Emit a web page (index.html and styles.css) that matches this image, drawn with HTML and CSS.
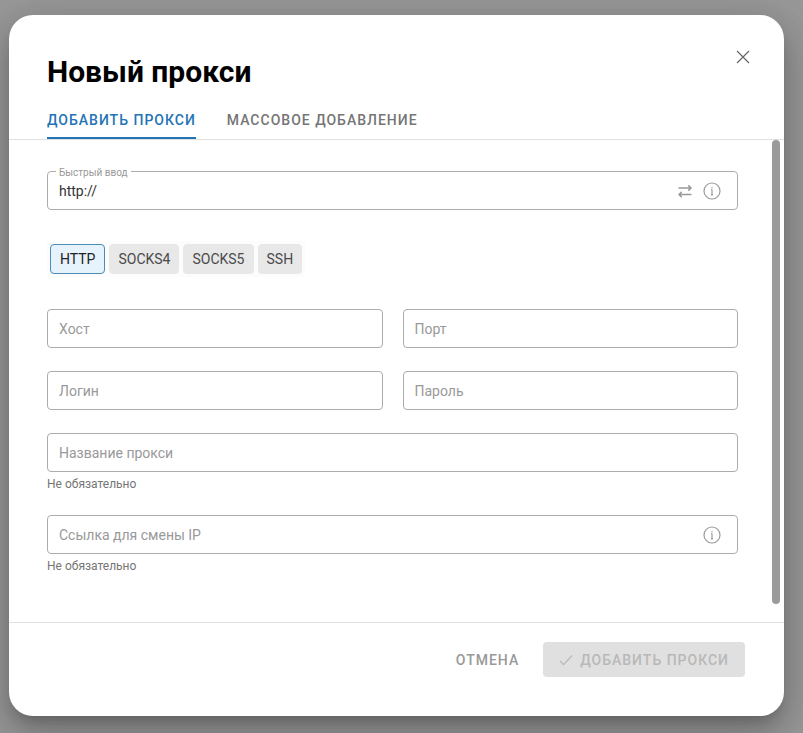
FILE: index.html
```
<!DOCTYPE html>
<html lang="ru">
<head>
  <meta charset="UTF-8">
  <meta name="viewport" content="width=device-width, initial-scale=1.0">
  <title>Новый прокси</title>
  <link rel="stylesheet" href="styles.css">
</head>
<body>

  <div class="modal" role="dialog" aria-labelledby="modal-title">
    <header class="modal-header">
      <div class="title-row">
        <h1 id="modal-title">Новый прокси</h1>
        <button class="icon-btn close" type="button" aria-label="Закрыть">
          <svg width="14" height="14" viewBox="0 0 14 14"><path d="M1 1l12 12M13 1L1 13"/></svg>
        </button>
      </div>
      <div class="tabs" role="tablist">
        <button class="tab active" type="button" role="tab" aria-selected="true">Добавить прокси</button>
        <button class="tab" type="button" role="tab" aria-selected="false">Массовое добавление</button>
      </div>
    </header>

    <div class="modal-body">
      <form class="form" id="proxy-form">
        <div class="field">
          <label class="float-label" for="quick">Быстрый ввод</label>
          <input id="quick" type="text" value="http://">
          <button class="icon-btn" type="button" aria-label="Поменять формат">
            <svg class="swap" width="14" height="14" viewBox="0 0 14 14"><path d="M.5 4H13M10.3 1.4L13 4l-2.7 2.6M13.5 10.5H1M3.7 7.9L1 10.5l2.7 2.6"/></svg>
          </button>
          <button class="icon-btn" type="button" aria-label="Подсказка">
            <svg class="info" width="18" height="18" viewBox="0 0 18 18"><circle cx="9" cy="9" r="8"/><path d="M9 7.6v5.2M9 5v1.3M8.2 7.6H9M8 12.8h2"/></svg>
          </button>
        </div>

        <div class="types">
          <label class="type"><input type="radio" name="type" checked><span>HTTP</span></label>
          <label class="type"><input type="radio" name="type"><span>SOCKS4</span></label>
          <label class="type"><input type="radio" name="type"><span>SOCKS5</span></label>
          <label class="type"><input type="radio" name="type"><span>SSH</span></label>
        </div>

        <div class="grid">
          <div class="field"><input type="text" placeholder="Хост" aria-label="Хост"></div>
          <div class="field"><input type="text" placeholder="Порт" aria-label="Порт"></div>
          <div class="field"><input type="text" placeholder="Логин" aria-label="Логин"></div>
          <div class="field"><input type="password" placeholder="Пароль" aria-label="Пароль"></div>
        </div>

        <div class="group">
          <div class="field"><input type="text" placeholder="Название прокси" aria-label="Название прокси" aria-describedby="name-hint"></div>
          <p class="hint" id="name-hint">Не обязательно</p>
        </div>

        <div class="group">
          <div class="field">
            <input type="text" placeholder="Ссылка для смены IP" aria-label="Ссылка для смены IP" aria-describedby="link-hint">
            <button class="icon-btn" type="button" aria-label="Подсказка">
              <svg class="info" width="18" height="18" viewBox="0 0 18 18"><circle cx="9" cy="9" r="8"/><path d="M9 7.6v5.2M9 5v1.3M8.2 7.6H9M8 12.8h2"/></svg>
            </button>
          </div>
          <p class="hint" id="link-hint">Не обязательно</p>
        </div>
      </form>
      <div class="scroll-thumb"></div>
    </div>

    <footer class="modal-footer">
      <button class="btn" type="button">Отмена</button>
      <button class="btn submit" type="submit" form="proxy-form" disabled>
        <svg width="14" height="12" viewBox="0 0 14 12"><path d="M1 7l3.6 3.6L13 1.5"/></svg>
        Добавить прокси
      </button>
    </footer>
  </div>

</body>
</html>
```

FILE: styles.css
```
:root {
  --blue: #2474b5;
  --border: #acacac;
  --line: #e0e0e0;
  --muted: #999;
}

* {
  box-sizing: border-box;
  margin: 0;
  padding: 0;
}

body {
  min-height: 100vh;
  display: flex;
  padding: 15px 19px 17px 9px;
  background: #989898;
  font-family: Roboto, sans-serif;
  font-size: 14px;
}

button,
input {
  font: inherit;
  color: inherit;
  border: 0;
  background: none;
}

button {
  cursor: pointer;
}

svg {
  display: block;
  fill: none;
  stroke: currentColor;
  stroke-width: 1.2;
}

.modal {
  flex: 1;
  display: flex;
  flex-direction: column;
  background: #fff;
  border-radius: 24px;
  overflow: hidden;
  box-shadow: 0 10px 14px -6px rgba(0, 0, 0, 0.2), 0 20px 36px 3px rgba(0, 0, 0, 0.14), 0 8px 42px 7px rgba(0, 0, 0, 0.12);
}

/* header */
.modal-header {
  padding: 32px 31px 0 38px;
  border-bottom: 1px solid var(--line);
}

.title-row {
  display: flex;
  justify-content: space-between;
  align-items: flex-start;
}

h1 {
  font-size: 30px;
  line-height: 50px;
  font-weight: 700;
  color: #000;
}

.icon-btn {
  flex: none;
  color: var(--muted);
}

.close {
  padding: 3px;
  color: #666;
}

.tabs {
  display: flex;
  gap: 31px;
}

.tab,
.btn {
  font-size: 14px;
  font-weight: 500;
  letter-spacing: 1px;
  text-transform: uppercase;
}

.tab {
  height: 42px;
  padding-top: 6px;
  color: #757575;
  border-bottom: 2px solid transparent;
}

.tab.active {
  color: var(--blue);
  border-color: var(--blue);
}

/* body */
.modal-body {
  position: relative;
  flex: 1;
}

.form {
  padding: 31px 46px 31px 38px;
}

.field {
  position: relative;
  display: flex;
  align-items: center;
  gap: 11px;
  height: 39px;
  padding: 0 16px 0 11px;
  border: 1px solid var(--border);
  border-radius: 4px;
  color: #333;
}

.field input {
  flex: 1;
  min-width: 0;
  height: 100%;
  outline: 0;
}

.field input::placeholder {
  color: var(--muted);
}

.float-label {
  position: absolute;
  top: -6px;
  left: 8px;
  padding: 0 3px;
  background: #fff;
  color: var(--muted);
  font-size: 10px;
  line-height: 14px;
}

.swap {
  stroke-width: 1.5;
}

.types {
  display: flex;
  width: max-content;
  gap: 4px;
  margin: 31px 0 32px;
  padding: 3px;
  border-radius: 4px;
  background: #fcfcfc;
}

.type input {
  position: absolute;
  opacity: 0;
}

.type span {
  display: block;
  height: 30px;
  padding: 0 8px;
  border: 1px solid #e8e8e8;
  border-radius: 4px;
  background: #e8e8e8;
  color: #4a4a4a;
  line-height: 28px;
  cursor: pointer;
}

.type input:checked + span {
  padding: 0 9px;
  border-color: #4a8db5;
  background: #e6f2fc;
  color: #222;
}

.grid {
  display: grid;
  grid-template-columns: 1fr 1fr;
  gap: 23px 20px;
}

.group {
  margin-top: 23px;
}

.hint {
  padding-top: 4px;
  font-size: 12px;
  line-height: 16px;
  color: #757575;
}

.scroll-thumb {
  position: absolute;
  top: 0;
  right: 4px;
  bottom: 18px;
  width: 8px;
  border-radius: 4px;
  background: #9b9b9b;
}

/* footer */
.modal-footer {
  display: flex;
  justify-content: flex-end;
  gap: 8px;
  padding: 19px 39px 39px;
  border-top: 1px solid var(--line);
}

.btn {
  display: flex;
  align-items: center;
  gap: 7px;
  height: 35px;
  padding: 0 16px;
  border-radius: 4px;
  color: var(--muted);
}

.submit {
  background: #e0e0e0;
  color: #b8b8b8;
  cursor: default;
}
```
